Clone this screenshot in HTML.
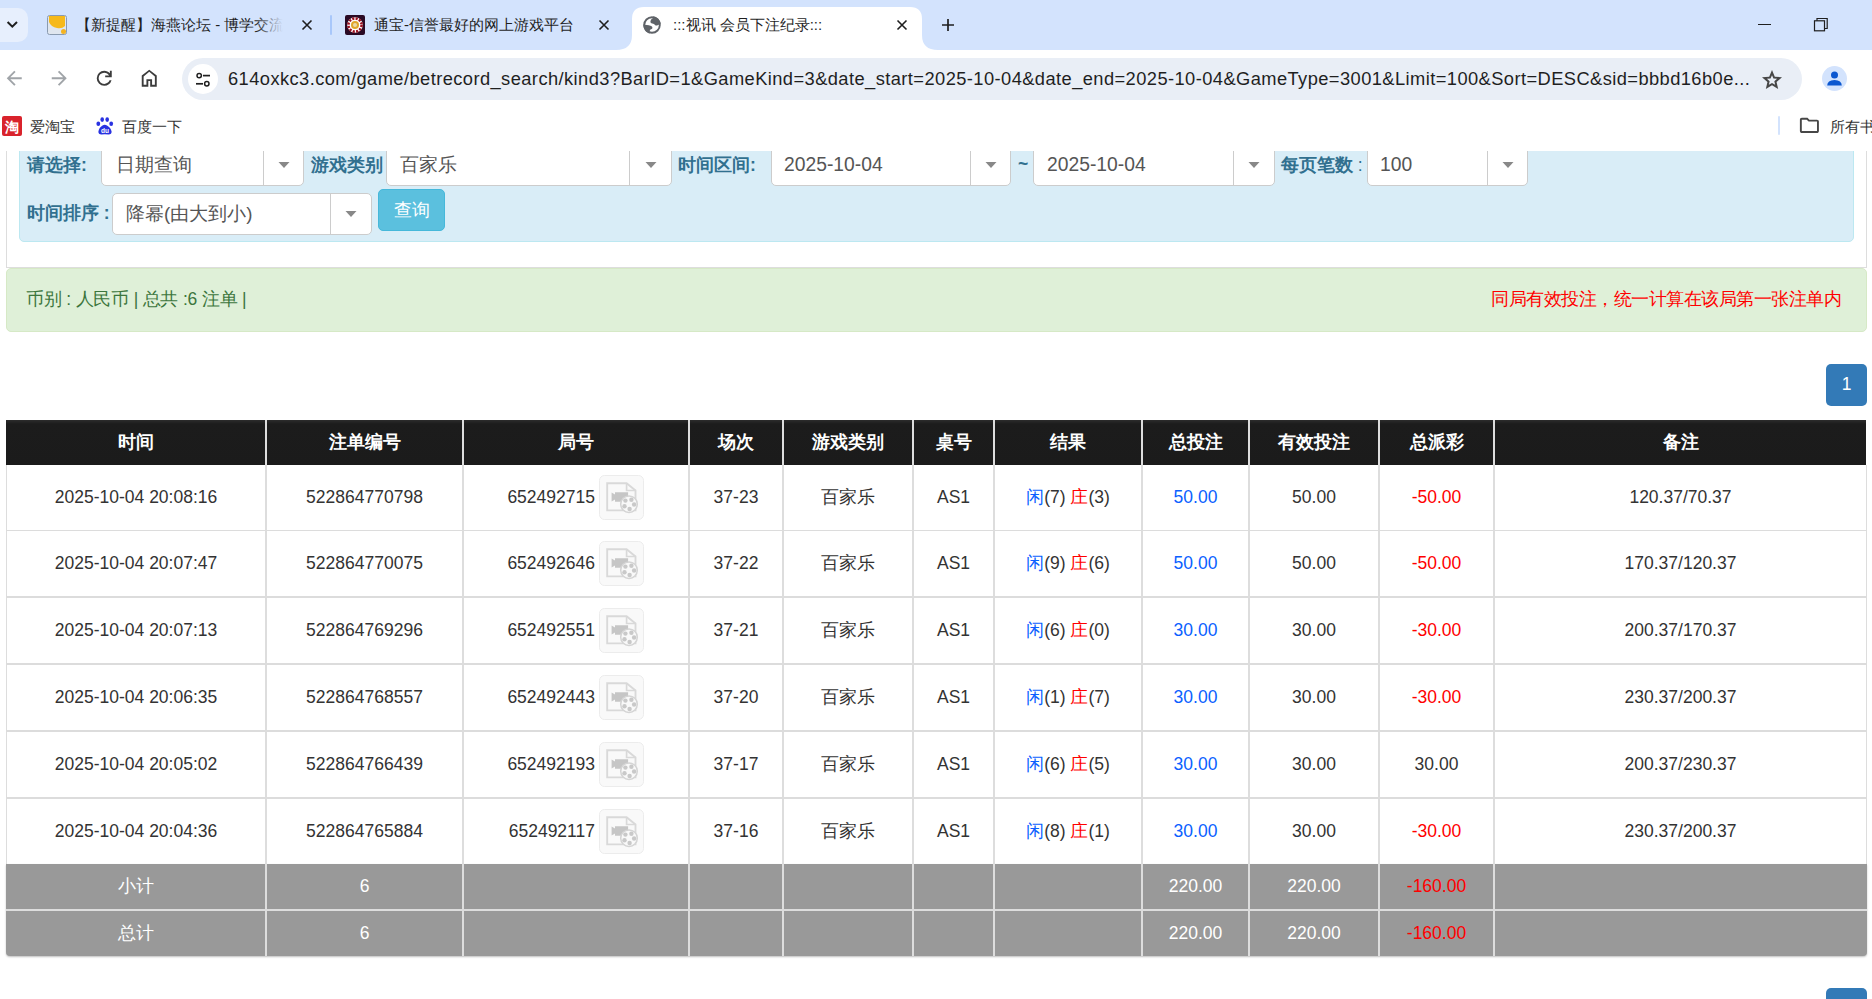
<!DOCTYPE html>
<html><head><meta charset="utf-8"><title>视讯 会员下注纪录</title>
<style>
html,body{margin:0;padding:0;width:1872px;height:999px;overflow:hidden;background:#fff;font-family:"Liberation Sans", sans-serif;}
svg{display:block}
</style></head><body>
<div style="position:absolute;left:0px;top:0px;width:1872px;height:50px;background:#d3e3fd"></div><div style="position:absolute;left:-14px;top:8px;width:42px;height:34px;background:#e7effd;border-radius:10px"></div><svg style="position:absolute;left:5px;top:18px" width="14" height="14" viewBox="0 0 14 14"><path d="M2.6 4 L7.3 8.7 L12 4" stroke="#1f1f1f" stroke-width="2" fill="none"/></svg><svg style="position:absolute;left:47px;top:15px" width="20" height="20" viewBox="0 0 20 20"><rect x="0.5" y="0.5" width="19" height="19" rx="2" fill="#dfe6ef" stroke="#8a9bb0" stroke-width="1"/><path d="M2 1 H18 V11 Q15 14 10 13 Q4 12 2 7 Z" fill="#f6b91a"/><circle cx="16.5" cy="16.5" r="2.5" fill="#f4b320"/></svg><div style="position:absolute;left:76px;top:14px;white-space:nowrap;font-size:15px;line-height:22px;color:#1f1f1f;width:210px;overflow:hidden">【新提醒】海燕论坛 - 博学交流</div><div style="position:absolute;left:255px;top:12px;width:40px;height:26px;background:linear-gradient(90deg, rgba(211,227,253,0), #d3e3fd 70%)"></div><svg style="position:absolute;left:301px;top:19px" width="12" height="12" viewBox="0 0 12 12"><path d="M1.5 1.5 L10.5 10.5 M10.5 1.5 L1.5 10.5" stroke="#1f1f1f" stroke-width="1.6"/></svg><div style="position:absolute;left:330px;top:15px;width:2px;height:20px;background:#a8c7fa;border-radius:1px"></div><svg style="position:absolute;left:345px;top:15px" width="20" height="20" viewBox="0 0 20 20"><rect x="0" y="0" width="20" height="20" rx="2" fill="#2a0a24"/><circle cx="10" cy="10" r="7.8" fill="#fff"/><circle cx="10" cy="10" r="6.6" fill="none" stroke="#9b1020" stroke-width="2.6" stroke-dasharray="2.2 1.3"/><circle cx="10" cy="10" r="4" fill="#e0a52a"/><circle cx="10" cy="10" r="2" fill="#e9d9a8"/></svg><div style="position:absolute;left:374px;top:14px;white-space:nowrap;font-size:15px;line-height:22px;color:#1f1f1f">通宝-信誉最好的网上游戏平台</div><svg style="position:absolute;left:598px;top:19px" width="12" height="12" viewBox="0 0 12 12"><path d="M1.5 1.5 L10.5 10.5 M10.5 1.5 L1.5 10.5" stroke="#1f1f1f" stroke-width="1.6"/></svg><svg style="position:absolute;left:616px;top:7px" width="322" height="43" viewBox="0 0 322 43"><path d="M0 43 Q16 43 16 28 L16 12 Q16 0 28 0 L294 0 Q306 0 306 12 L306 28 Q306 43 322 43 Z" fill="#fff"/></svg><svg style="position:absolute;left:640px;top:13px" width="24" height="24" viewBox="0 0 24 24"><circle cx="12" cy="12" r="7.8" fill="none" stroke="#5f6368" stroke-width="1.9"/><path d="M13.2 3.3 L13 5 Q10.6 6.5 10.4 8.2 Q10.2 10.4 12.3 10.6 Q14.3 10.8 15 12 Q16.2 13 18 12 L20.7 11 A8.7 8.7 0 0 0 13.2 3.3 Z" fill="#5f6368"/><path d="M3.3 11.6 L5 11.8 Q9.5 12.2 11.2 13 Q12.8 14 12.4 15.3 Q12 16.3 10.4 16.6 Q9.5 17.3 9.6 20.5 A8.7 8.7 0 0 1 3.3 11.6 Z" fill="#5f6368"/></svg><div style="position:absolute;left:673px;top:14px;white-space:nowrap;font-size:15px;line-height:22px;color:#1f1f1f">:::视讯 会员下注纪录:::</div><svg style="position:absolute;left:896px;top:19px" width="12" height="12" viewBox="0 0 12 12"><path d="M1.5 1.5 L10.5 10.5 M10.5 1.5 L1.5 10.5" stroke="#1f1f1f" stroke-width="1.6"/></svg><svg style="position:absolute;left:941px;top:18px" width="14" height="14" viewBox="0 0 14 14"><path d="M7 1 V13 M1 7 H13" stroke="#1f1f1f" stroke-width="1.7"/></svg><div style="position:absolute;left:1758px;top:24px;width:13px;height:1px;background:#1f1f1f"></div><svg style="position:absolute;left:1813px;top:17px" width="16" height="16" viewBox="0 0 16 16"><rect x="1.5" y="3.8" width="10" height="10" fill="none" stroke="#1f1f1f" stroke-width="1.2"/><path d="M4 3.8 V1.5 H14.2 V11.5 H11.5" fill="none" stroke="#1f1f1f" stroke-width="1.2"/></svg><div style="position:absolute;left:0px;top:50px;width:1872px;height:101px;background:#fff"></div><svg style="position:absolute;left:3.25px;top:67.25px" width="22.5" height="22.5" viewBox="0 -960 960 960"><path d="m313-440 224 224-57 56-320-320 320-320 57 56-224 224h487v80H313Z" fill="#a0a4a8"/></svg><svg style="position:absolute;left:48.25px;top:67.25px" width="22.5" height="22.5" viewBox="0 -960 960 960"><path d="M647-440H160v-80h487L423-744l57-56 320 320-320 320-57-56 224-224Z" fill="#a0a4a8"/></svg><svg style="position:absolute;left:93.25px;top:67.25px" width="22.5" height="22.5" viewBox="0 -960 960 960"><path d="M480-160q-134 0-227-93t-93-227q0-134 93-227t227-93q69 0 132 28.5T720-690v-110h80v280H520v-80h168q-32-56-87.5-88T480-720q-100 0-170 70t-70 170q0 100 70 170t170 70q77 0 139-44t87-116h84q-28 106-114 173t-196 67Z" fill="#3c3c3c"/></svg><svg style="position:absolute;left:138.25px;top:67.2px" width="22.5" height="22.5" viewBox="0 -960 960 960"><path d="M240-200h120v-240h240v240h120v-360L480-760 240-560v360Zm-80 80v-480l320-240 320 240v480H520v-240h-80v240H160Zm320-350Z" fill="#3c3c3c"/></svg><div style="position:absolute;left:182px;top:58px;width:1620px;height:42px;background:#e9eef6;border-radius:21px"></div><div style="position:absolute;left:188px;top:64px;width:30px;height:30px;background:#fff;border-radius:15px"></div><svg style="position:absolute;left:195px;top:72px" width="16" height="16" viewBox="0 0 16 16"><circle cx="4.2" cy="3.6" r="2.2" stroke="#1f1f1f" stroke-width="1.5" fill="none"/><path d="M8 3.6 H15" stroke="#1f1f1f" stroke-width="1.7"/><circle cx="11.8" cy="11.8" r="2.2" stroke="#1f1f1f" stroke-width="1.5" fill="none"/><path d="M1 11.8 H8" stroke="#1f1f1f" stroke-width="1.7"/></svg><div style="position:absolute;left:228px;top:66px;white-space:nowrap;font-size:18.3px;line-height:26px;color:#1f1f1f;letter-spacing:0.427px">614oxkc3.com/game/betrecord_search/kind3?BarID=1&amp;GameKind=3&amp;date_start=2025-10-04&amp;date_end=2025-10-04&amp;GameType=3001&amp;Limit=100&amp;Sort=DESC&amp;sid=bbbd16b0e...</div><svg style="position:absolute;left:1760px;top:68px" width="24" height="24" viewBox="0 -960 960 960"><path d="m354-287 126-76 126 77-33-144 111-96-146-13-58-136-58 135-146 13 111 97-33 143ZM233-120l65-281L80-590l288-25 112-265 112 265 288 25-218 189 65 281-247-149-247 149Z" fill="#474747"/></svg><div style="position:absolute;left:1822px;top:66px;width:25px;height:25px;background:#d3e3fd;border-radius:13px"></div><svg style="position:absolute;left:1826px;top:70px" width="17" height="17" viewBox="0 0 17 17"><circle cx="8.5" cy="5" r="3.5" fill="#0b57d0"/><path d="M1.2 15.5 Q1.3 10.2 8.5 10 Q15.7 10.2 15.8 15.5 Z" fill="#0b57d0"/></svg><svg style="position:absolute;left:2px;top:116px" width="20" height="20" viewBox="0 0 20 20"><rect width="20" height="20" rx="2" fill="#d9232c"/><text x="10" y="15.5" font-size="14" font-weight="bold" fill="#fff" text-anchor="middle" font-family="sans-serif">淘</text></svg><div style="position:absolute;left:30px;top:116px;white-space:nowrap;font-size:15px;line-height:22px;color:#333">爱淘宝</div><svg style="position:absolute;left:96px;top:116px" width="18" height="20" viewBox="0 0 18 20"><ellipse cx="2.3" cy="7.8" rx="1.9" ry="2.3" fill="#2932e1"/><ellipse cx="6.2" cy="3.6" rx="1.8" ry="2.4" fill="#2932e1"/><ellipse cx="11.2" cy="3.6" rx="1.8" ry="2.4" fill="#2932e1"/><ellipse cx="15.2" cy="7.8" rx="1.9" ry="2.3" fill="#2932e1"/><path d="M2.4 15.5 Q3 11.5 6.5 9.5 Q8.7 8 11 9.5 Q14.8 11.5 15.6 15.5 Q15.8 18.4 12.5 18.6 Q8.7 18 5.5 18.6 Q2.2 18.4 2.4 15.5 Z" fill="#2932e1"/><text x="8.9" y="16.8" font-size="6.5" fill="#fff" text-anchor="middle" font-family="Liberation Sans" font-weight="bold">du</text></svg><div style="position:absolute;left:122px;top:116px;white-space:nowrap;font-size:15px;line-height:22px;color:#333">百度一下</div><div style="position:absolute;left:1778px;top:116px;width:2px;height:19px;background:#d3e3fd;border-radius:1px"></div><svg style="position:absolute;left:1798.1px;top:114.2px" width="22.8" height="22.8" viewBox="0 -960 960 960"><path d="M160-160q-33 0-56.5-23.5T80-240v-480q0-33 23.5-56.5T160-800h240l80 80h320q33 0 56.5 23.5T880-640v400q0 33-23.5 56.5T800-160H160Zm0-80h640v-400H447l-80-80H160v480Zm0 0v-480 480Z" fill="#474747"/></svg><div style="position:absolute;left:1830px;top:116px;white-space:nowrap;font-size:15px;line-height:22px;color:#333">所有书签</div><div style="position:absolute;left:0;top:151px;width:1872px;height:848px;overflow:hidden;background:#fff"><div style="position:absolute;left:6px;top:-51px;width:1861px;height:168px;border:1px solid #ddd;border-top:none;box-sizing:border-box;border-bottom:1px solid #ddd"></div><div style="position:absolute;left:19px;top:-51px;width:1835px;height:142px;background:#d9edf7;border:1px solid #bce8f1;border-radius:5px;box-sizing:border-box"></div><div style="position:absolute;left:27.0px;top:-1.0px;width:400px;height:30px;display:flex;align-items:center;justify-content:center;white-space:nowrap;font-size:17.5px;font-weight:bold;color:#31708f;line-height:24px;justify-content:flex-start"><span>请选择:</span></div><div style="position:absolute;left:101px;top:-51px;width:203px;height:86px;background:#fff;border:1px solid #ccc;border-radius:5px;box-sizing:border-box"></div><div style="position:absolute;left:263px;top:-50px;width:1px;height:84px;background:#ccc"></div><svg style="position:absolute;left:277.5px;top:11px" width="12" height="6" viewBox="0 0 12 6"><path d="M0.5 0 H11.5 L6 6 Z" fill="#888"/></svg><div style="position:absolute;left:116.0px;top:-1.0px;width:400px;height:30px;display:flex;align-items:center;justify-content:center;white-space:nowrap;font-size:18.75px;color:#555;line-height:26px;justify-content:flex-start"><span>日期查询</span></div><div style="position:absolute;left:311.0px;top:-1.0px;width:400px;height:30px;display:flex;align-items:center;justify-content:center;white-space:nowrap;font-size:17.5px;font-weight:bold;color:#31708f;line-height:24px;justify-content:flex-start"><span>游戏类别</span></div><div style="position:absolute;left:386px;top:-51px;width:286px;height:86px;background:#fff;border:1px solid #ccc;border-radius:5px;box-sizing:border-box"></div><div style="position:absolute;left:629px;top:-50px;width:1px;height:84px;background:#ccc"></div><svg style="position:absolute;left:644.5px;top:11px" width="12" height="6" viewBox="0 0 12 6"><path d="M0.5 0 H11.5 L6 6 Z" fill="#888"/></svg><div style="position:absolute;left:400.0px;top:-1.0px;width:400px;height:30px;display:flex;align-items:center;justify-content:center;white-space:nowrap;font-size:18.75px;color:#555;line-height:26px;justify-content:flex-start"><span>百家乐</span></div><div style="position:absolute;left:678.0px;top:-1.0px;width:400px;height:30px;display:flex;align-items:center;justify-content:center;white-space:nowrap;font-size:17.5px;font-weight:bold;color:#31708f;line-height:24px;justify-content:flex-start"><span>时间区间:</span></div><div style="position:absolute;left:771px;top:-51px;width:240px;height:86px;background:#fff;border:1px solid #ccc;border-radius:5px;box-sizing:border-box"></div><div style="position:absolute;left:970px;top:-50px;width:1px;height:84px;background:#ccc"></div><svg style="position:absolute;left:984.5px;top:11px" width="12" height="6" viewBox="0 0 12 6"><path d="M0.5 0 H11.5 L6 6 Z" fill="#888"/></svg><div style="position:absolute;left:784.0px;top:-1.0px;width:400px;height:30px;display:flex;align-items:center;justify-content:center;white-space:nowrap;font-size:18.75px;color:#555;line-height:26px;justify-content:flex-start"><span><span style="font-size:19.3px">2025-10-04</span></span></div><div style="position:absolute;left:1013.0px;top:-2.0px;width:20px;height:30px;display:flex;align-items:center;justify-content:center;white-space:nowrap;font-size:17.5px;font-weight:bold;color:#31708f;line-height:24px"><span>~</span></div><div style="position:absolute;left:1033px;top:-51px;width:242px;height:86px;background:#fff;border:1px solid #ccc;border-radius:5px;box-sizing:border-box"></div><div style="position:absolute;left:1233px;top:-50px;width:1px;height:84px;background:#ccc"></div><svg style="position:absolute;left:1248.0px;top:11px" width="12" height="6" viewBox="0 0 12 6"><path d="M0.5 0 H11.5 L6 6 Z" fill="#888"/></svg><div style="position:absolute;left:1047.0px;top:-1.0px;width:400px;height:30px;display:flex;align-items:center;justify-content:center;white-space:nowrap;font-size:18.75px;color:#555;line-height:26px;justify-content:flex-start"><span><span style="font-size:19.3px">2025-10-04</span></span></div><div style="position:absolute;left:1281.0px;top:-1.0px;width:400px;height:30px;display:flex;align-items:center;justify-content:center;white-space:nowrap;font-size:17.5px;font-weight:bold;color:#31708f;line-height:24px;justify-content:flex-start"><span>每页笔数<span style="font-weight:normal"> :</span></span></div><div style="position:absolute;left:1367px;top:-51px;width:161px;height:86px;background:#fff;border:1px solid #ccc;border-radius:5px;box-sizing:border-box"></div><div style="position:absolute;left:1487px;top:-50px;width:1px;height:84px;background:#ccc"></div><svg style="position:absolute;left:1501.5px;top:11px" width="12" height="6" viewBox="0 0 12 6"><path d="M0.5 0 H11.5 L6 6 Z" fill="#888"/></svg><div style="position:absolute;left:1380.0px;top:-1.0px;width:400px;height:30px;display:flex;align-items:center;justify-content:center;white-space:nowrap;font-size:18.75px;color:#555;line-height:26px;justify-content:flex-start"><span><span style="font-size:19.3px">100</span></span></div><div style="position:absolute;left:27.0px;top:47.0px;width:400px;height:30px;display:flex;align-items:center;justify-content:center;white-space:nowrap;font-size:17.5px;font-weight:bold;color:#31708f;line-height:24px;justify-content:flex-start"><span>时间排序 :</span></div><div style="position:absolute;left:112px;top:42px;width:260px;height:42px;background:#fff;border:1px solid #ccc;border-radius:5px;box-sizing:border-box"></div><div style="position:absolute;left:330px;top:43px;width:1px;height:40px;background:#ccc"></div><svg style="position:absolute;left:345.0px;top:60.0px" width="12" height="6" viewBox="0 0 12 6"><path d="M0.5 0 H11.5 L6 6 Z" fill="#888"/></svg><div style="position:absolute;left:126.0px;top:48.0px;width:400px;height:30px;display:flex;align-items:center;justify-content:center;white-space:nowrap;font-size:18.75px;color:#555;line-height:26px;justify-content:flex-start"><span>降幂(由大到小)</span></div><div style="position:absolute;left:378px;top:38px;width:67px;height:42px;background:#5bc0de;border:1px solid #46b8da;border-radius:5px;box-sizing:border-box"></div><div style="position:absolute;left:381.5px;top:43.5px;width:60px;height:30px;display:flex;align-items:center;justify-content:center;white-space:nowrap;font-size:17.5px;color:#fff"><span>查询</span></div><div style="position:absolute;left:6px;top:117px;width:1861px;height:64px;background:#dff0d8;border:1px solid #d6e9c6;border-radius:5px;box-sizing:border-box"></div><div style="position:absolute;left:26.0px;top:133.0px;width:600px;height:30px;display:flex;align-items:center;justify-content:center;white-space:nowrap;font-size:17.5px;letter-spacing:-0.2px;color:#3c763d;justify-content:flex-start"><span>币别 : 人民币 | 总共 :6 注单 |</span></div><div style="position:absolute;left:1241.0px;top:133.0px;width:600px;height:30px;display:flex;align-items:center;justify-content:center;white-space:nowrap;font-size:17.5px;letter-spacing:-0.5px;color:#ff0000;justify-content:flex-end"><span>同局有效投注，统一计算在该局第一张注单内</span></div><div style="position:absolute;left:1826px;top:213px;width:41px;height:42px;background:#337ab7;border-radius:5px"></div><div style="position:absolute;left:1826.5px;top:218.0px;width:40px;height:30px;display:flex;align-items:center;justify-content:center;white-space:nowrap;font-size:17.5px;color:#fff"><span>1</span></div><div style="position:absolute;left:6px;top:269px;width:1860px;height:45px;background:linear-gradient(#2c2c2c, #1c1c1c 4px, #1b1b1b)"></div><div style="position:absolute;left:6px;top:314px;width:1861px;height:399px;background:#fff;border-left:1px solid #ddd;border-right:1px solid #ddd;box-sizing:border-box"></div><div style="position:absolute;left:6px;top:713px;width:1861px;height:92px;background:#999;border-radius:0 0 4px 4px;box-shadow:0 1px 2px rgba(0,0,0,0.25)"></div><div style="position:absolute;left:265px;top:269px;width:2px;height:45px;background:#ddd"></div><div style="position:absolute;left:265px;top:314px;width:2px;height:491px;background:#ddd"></div><div style="position:absolute;left:462px;top:269px;width:2px;height:45px;background:#ddd"></div><div style="position:absolute;left:462px;top:314px;width:2px;height:491px;background:#ddd"></div><div style="position:absolute;left:688px;top:269px;width:2px;height:45px;background:#ddd"></div><div style="position:absolute;left:688px;top:314px;width:2px;height:491px;background:#ddd"></div><div style="position:absolute;left:782px;top:269px;width:2px;height:45px;background:#ddd"></div><div style="position:absolute;left:782px;top:314px;width:2px;height:491px;background:#ddd"></div><div style="position:absolute;left:912px;top:269px;width:2px;height:45px;background:#ddd"></div><div style="position:absolute;left:912px;top:314px;width:2px;height:491px;background:#ddd"></div><div style="position:absolute;left:993px;top:269px;width:2px;height:45px;background:#ddd"></div><div style="position:absolute;left:993px;top:314px;width:2px;height:491px;background:#ddd"></div><div style="position:absolute;left:1141px;top:269px;width:2px;height:45px;background:#ddd"></div><div style="position:absolute;left:1141px;top:314px;width:2px;height:491px;background:#ddd"></div><div style="position:absolute;left:1248px;top:269px;width:2px;height:45px;background:#ddd"></div><div style="position:absolute;left:1248px;top:314px;width:2px;height:491px;background:#ddd"></div><div style="position:absolute;left:1378px;top:269px;width:2px;height:45px;background:#ddd"></div><div style="position:absolute;left:1378px;top:314px;width:2px;height:491px;background:#ddd"></div><div style="position:absolute;left:1493px;top:269px;width:2px;height:45px;background:#ddd"></div><div style="position:absolute;left:1493px;top:314px;width:2px;height:491px;background:#ddd"></div><div style="position:absolute;left:6px;top:379px;width:1861px;height:1px;background:#dcdcdc"></div><div style="position:absolute;left:6px;top:445px;width:1861px;height:2px;background:#dcdcdc"></div><div style="position:absolute;left:6px;top:512px;width:1861px;height:2px;background:#dcdcdc"></div><div style="position:absolute;left:6px;top:579px;width:1861px;height:2px;background:#dcdcdc"></div><div style="position:absolute;left:6px;top:646px;width:1861px;height:2px;background:#dcdcdc"></div><div style="position:absolute;left:6px;top:758px;width:1861px;height:2px;background:#ddd"></div><div style="position:absolute;left:-14.0px;top:276.0px;width:300px;height:30px;display:flex;align-items:center;justify-content:center;white-space:nowrap;font-size:17.5px;font-weight:bold;color:#fff"><span>时间</span></div><div style="position:absolute;left:214.5px;top:276.0px;width:300px;height:30px;display:flex;align-items:center;justify-content:center;white-space:nowrap;font-size:17.5px;font-weight:bold;color:#fff"><span>注单编号</span></div><div style="position:absolute;left:426.0px;top:276.0px;width:300px;height:30px;display:flex;align-items:center;justify-content:center;white-space:nowrap;font-size:17.5px;font-weight:bold;color:#fff"><span>局号</span></div><div style="position:absolute;left:586.0px;top:276.0px;width:300px;height:30px;display:flex;align-items:center;justify-content:center;white-space:nowrap;font-size:17.5px;font-weight:bold;color:#fff"><span>场次</span></div><div style="position:absolute;left:698.0px;top:276.0px;width:300px;height:30px;display:flex;align-items:center;justify-content:center;white-space:nowrap;font-size:17.5px;font-weight:bold;color:#fff"><span>游戏类别</span></div><div style="position:absolute;left:803.5px;top:276.0px;width:300px;height:30px;display:flex;align-items:center;justify-content:center;white-space:nowrap;font-size:17.5px;font-weight:bold;color:#fff"><span>桌号</span></div><div style="position:absolute;left:918.0px;top:276.0px;width:300px;height:30px;display:flex;align-items:center;justify-content:center;white-space:nowrap;font-size:17.5px;font-weight:bold;color:#fff"><span>结果</span></div><div style="position:absolute;left:1045.5px;top:276.0px;width:300px;height:30px;display:flex;align-items:center;justify-content:center;white-space:nowrap;font-size:17.5px;font-weight:bold;color:#fff"><span>总投注</span></div><div style="position:absolute;left:1164.0px;top:276.0px;width:300px;height:30px;display:flex;align-items:center;justify-content:center;white-space:nowrap;font-size:17.5px;font-weight:bold;color:#fff"><span>有效投注</span></div><div style="position:absolute;left:1286.5px;top:276.0px;width:300px;height:30px;display:flex;align-items:center;justify-content:center;white-space:nowrap;font-size:17.5px;font-weight:bold;color:#fff"><span>总派彩</span></div><div style="position:absolute;left:1530.5px;top:276.0px;width:300px;height:30px;display:flex;align-items:center;justify-content:center;white-space:nowrap;font-size:17.5px;font-weight:bold;color:#fff"><span>备注</span></div><div style="position:absolute;left:11.0px;top:331.0px;width:250px;height:30px;display:flex;align-items:center;justify-content:center;white-space:nowrap;font-size:17.5px;color:#333"><span>2025-10-04 20:08:16</span></div><div style="position:absolute;left:269.5px;top:331.0px;width:190px;height:30px;display:flex;align-items:center;justify-content:center;white-space:nowrap;font-size:17.5px;color:#333"><span>522864770798</span></div><div style="position:absolute;left:295.0px;top:331.0px;width:300px;height:30px;display:flex;align-items:center;justify-content:center;white-space:nowrap;font-size:17.5px;color:#333;justify-content:flex-end"><span>652492715</span></div><svg style="position:absolute;left:599px;top:324px" width="45" height="45" viewBox="0 0 45 45"><rect x="0.5" y="0.5" width="44" height="44" rx="5" fill="#f9f9f9" stroke="#ececec" stroke-width="1"/><path d="M8.2 8.3 H27.6 L36.5 15.5 V35.4 H8.2 Z" fill="#f9f9f9" stroke="#d9d9d9" stroke-width="1.9"/><path d="M27.6 8.3 V15.5 H36.5" fill="none" stroke="#d9d9d9" stroke-width="1.7"/><path d="M12.6 17.5 L16 19.5 V17.2 H29.1 V26.8 H16 V24.5 L12.6 26.5 Z" fill="#c6c6c6"/><circle cx="30" cy="29.2" r="8.3" fill="#f9f9f9" stroke="#d4d4d4" stroke-width="1.5"/><circle cx="26.4" cy="25.6" r="2.2" fill="#c9c9c9"/><circle cx="32.4" cy="24.7" r="2.2" fill="#c9c9c9"/><circle cx="35.1" cy="29.5" r="2.2" fill="#c9c9c9"/><circle cx="30.6" cy="34" r="2.2" fill="#c9c9c9"/><circle cx="25.5" cy="31.3" r="2.2" fill="#c9c9c9"/></svg><div style="position:absolute;left:691.0px;top:331.0px;width:90px;height:30px;display:flex;align-items:center;justify-content:center;white-space:nowrap;font-size:17.5px;color:#333"><span>37-23</span></div><div style="position:absolute;left:788.0px;top:331.0px;width:120px;height:30px;display:flex;align-items:center;justify-content:center;white-space:nowrap;font-size:17.5px;color:#333"><span>百家乐</span></div><div style="position:absolute;left:913.5px;top:331.0px;width:80px;height:30px;display:flex;align-items:center;justify-content:center;white-space:nowrap;font-size:17.5px;color:#333"><span>AS1</span></div><div style="position:absolute;left:998.0px;top:331.0px;width:140px;height:30px;display:flex;align-items:center;justify-content:center;white-space:nowrap;font-size:17.5px;color:#333"><span><span style="color:#0b5fff">闲</span>(7) <span style="color:#ff0000">庄</span>(3)</span></div><div style="position:absolute;left:1145.5px;top:331.0px;width:100px;height:30px;display:flex;align-items:center;justify-content:center;white-space:nowrap;font-size:17.5px;color:#333;color:#0b5fff"><span>50.00</span></div><div style="position:absolute;left:1254.0px;top:331.0px;width:120px;height:30px;display:flex;align-items:center;justify-content:center;white-space:nowrap;font-size:17.5px;color:#333"><span>50.00</span></div><div style="position:absolute;left:1381.5px;top:331.0px;width:110px;height:30px;display:flex;align-items:center;justify-content:center;white-space:nowrap;font-size:17.5px;color:#333;color:#ff0000"><span>-50.00</span></div><div style="position:absolute;left:1530.5px;top:331.0px;width:300px;height:30px;display:flex;align-items:center;justify-content:center;white-space:nowrap;font-size:17.5px;color:#333"><span>120.37/70.37</span></div><div style="position:absolute;left:11.0px;top:397.0px;width:250px;height:30px;display:flex;align-items:center;justify-content:center;white-space:nowrap;font-size:17.5px;color:#333"><span>2025-10-04 20:07:47</span></div><div style="position:absolute;left:269.5px;top:397.0px;width:190px;height:30px;display:flex;align-items:center;justify-content:center;white-space:nowrap;font-size:17.5px;color:#333"><span>522864770075</span></div><div style="position:absolute;left:295.0px;top:397.0px;width:300px;height:30px;display:flex;align-items:center;justify-content:center;white-space:nowrap;font-size:17.5px;color:#333;justify-content:flex-end"><span>652492646</span></div><svg style="position:absolute;left:599px;top:390px" width="45" height="45" viewBox="0 0 45 45"><rect x="0.5" y="0.5" width="44" height="44" rx="5" fill="#f9f9f9" stroke="#ececec" stroke-width="1"/><path d="M8.2 8.3 H27.6 L36.5 15.5 V35.4 H8.2 Z" fill="#f9f9f9" stroke="#d9d9d9" stroke-width="1.9"/><path d="M27.6 8.3 V15.5 H36.5" fill="none" stroke="#d9d9d9" stroke-width="1.7"/><path d="M12.6 17.5 L16 19.5 V17.2 H29.1 V26.8 H16 V24.5 L12.6 26.5 Z" fill="#c6c6c6"/><circle cx="30" cy="29.2" r="8.3" fill="#f9f9f9" stroke="#d4d4d4" stroke-width="1.5"/><circle cx="26.4" cy="25.6" r="2.2" fill="#c9c9c9"/><circle cx="32.4" cy="24.7" r="2.2" fill="#c9c9c9"/><circle cx="35.1" cy="29.5" r="2.2" fill="#c9c9c9"/><circle cx="30.6" cy="34" r="2.2" fill="#c9c9c9"/><circle cx="25.5" cy="31.3" r="2.2" fill="#c9c9c9"/></svg><div style="position:absolute;left:691.0px;top:397.0px;width:90px;height:30px;display:flex;align-items:center;justify-content:center;white-space:nowrap;font-size:17.5px;color:#333"><span>37-22</span></div><div style="position:absolute;left:788.0px;top:397.0px;width:120px;height:30px;display:flex;align-items:center;justify-content:center;white-space:nowrap;font-size:17.5px;color:#333"><span>百家乐</span></div><div style="position:absolute;left:913.5px;top:397.0px;width:80px;height:30px;display:flex;align-items:center;justify-content:center;white-space:nowrap;font-size:17.5px;color:#333"><span>AS1</span></div><div style="position:absolute;left:998.0px;top:397.0px;width:140px;height:30px;display:flex;align-items:center;justify-content:center;white-space:nowrap;font-size:17.5px;color:#333"><span><span style="color:#0b5fff">闲</span>(9) <span style="color:#ff0000">庄</span>(6)</span></div><div style="position:absolute;left:1145.5px;top:397.0px;width:100px;height:30px;display:flex;align-items:center;justify-content:center;white-space:nowrap;font-size:17.5px;color:#333;color:#0b5fff"><span>50.00</span></div><div style="position:absolute;left:1254.0px;top:397.0px;width:120px;height:30px;display:flex;align-items:center;justify-content:center;white-space:nowrap;font-size:17.5px;color:#333"><span>50.00</span></div><div style="position:absolute;left:1381.5px;top:397.0px;width:110px;height:30px;display:flex;align-items:center;justify-content:center;white-space:nowrap;font-size:17.5px;color:#333;color:#ff0000"><span>-50.00</span></div><div style="position:absolute;left:1530.5px;top:397.0px;width:300px;height:30px;display:flex;align-items:center;justify-content:center;white-space:nowrap;font-size:17.5px;color:#333"><span>170.37/120.37</span></div><div style="position:absolute;left:11.0px;top:464.0px;width:250px;height:30px;display:flex;align-items:center;justify-content:center;white-space:nowrap;font-size:17.5px;color:#333"><span>2025-10-04 20:07:13</span></div><div style="position:absolute;left:269.5px;top:464.0px;width:190px;height:30px;display:flex;align-items:center;justify-content:center;white-space:nowrap;font-size:17.5px;color:#333"><span>522864769296</span></div><div style="position:absolute;left:295.0px;top:464.0px;width:300px;height:30px;display:flex;align-items:center;justify-content:center;white-space:nowrap;font-size:17.5px;color:#333;justify-content:flex-end"><span>652492551</span></div><svg style="position:absolute;left:599px;top:457px" width="45" height="45" viewBox="0 0 45 45"><rect x="0.5" y="0.5" width="44" height="44" rx="5" fill="#f9f9f9" stroke="#ececec" stroke-width="1"/><path d="M8.2 8.3 H27.6 L36.5 15.5 V35.4 H8.2 Z" fill="#f9f9f9" stroke="#d9d9d9" stroke-width="1.9"/><path d="M27.6 8.3 V15.5 H36.5" fill="none" stroke="#d9d9d9" stroke-width="1.7"/><path d="M12.6 17.5 L16 19.5 V17.2 H29.1 V26.8 H16 V24.5 L12.6 26.5 Z" fill="#c6c6c6"/><circle cx="30" cy="29.2" r="8.3" fill="#f9f9f9" stroke="#d4d4d4" stroke-width="1.5"/><circle cx="26.4" cy="25.6" r="2.2" fill="#c9c9c9"/><circle cx="32.4" cy="24.7" r="2.2" fill="#c9c9c9"/><circle cx="35.1" cy="29.5" r="2.2" fill="#c9c9c9"/><circle cx="30.6" cy="34" r="2.2" fill="#c9c9c9"/><circle cx="25.5" cy="31.3" r="2.2" fill="#c9c9c9"/></svg><div style="position:absolute;left:691.0px;top:464.0px;width:90px;height:30px;display:flex;align-items:center;justify-content:center;white-space:nowrap;font-size:17.5px;color:#333"><span>37-21</span></div><div style="position:absolute;left:788.0px;top:464.0px;width:120px;height:30px;display:flex;align-items:center;justify-content:center;white-space:nowrap;font-size:17.5px;color:#333"><span>百家乐</span></div><div style="position:absolute;left:913.5px;top:464.0px;width:80px;height:30px;display:flex;align-items:center;justify-content:center;white-space:nowrap;font-size:17.5px;color:#333"><span>AS1</span></div><div style="position:absolute;left:998.0px;top:464.0px;width:140px;height:30px;display:flex;align-items:center;justify-content:center;white-space:nowrap;font-size:17.5px;color:#333"><span><span style="color:#0b5fff">闲</span>(6) <span style="color:#ff0000">庄</span>(0)</span></div><div style="position:absolute;left:1145.5px;top:464.0px;width:100px;height:30px;display:flex;align-items:center;justify-content:center;white-space:nowrap;font-size:17.5px;color:#333;color:#0b5fff"><span>30.00</span></div><div style="position:absolute;left:1254.0px;top:464.0px;width:120px;height:30px;display:flex;align-items:center;justify-content:center;white-space:nowrap;font-size:17.5px;color:#333"><span>30.00</span></div><div style="position:absolute;left:1381.5px;top:464.0px;width:110px;height:30px;display:flex;align-items:center;justify-content:center;white-space:nowrap;font-size:17.5px;color:#333;color:#ff0000"><span>-30.00</span></div><div style="position:absolute;left:1530.5px;top:464.0px;width:300px;height:30px;display:flex;align-items:center;justify-content:center;white-space:nowrap;font-size:17.5px;color:#333"><span>200.37/170.37</span></div><div style="position:absolute;left:11.0px;top:531.0px;width:250px;height:30px;display:flex;align-items:center;justify-content:center;white-space:nowrap;font-size:17.5px;color:#333"><span>2025-10-04 20:06:35</span></div><div style="position:absolute;left:269.5px;top:531.0px;width:190px;height:30px;display:flex;align-items:center;justify-content:center;white-space:nowrap;font-size:17.5px;color:#333"><span>522864768557</span></div><div style="position:absolute;left:295.0px;top:531.0px;width:300px;height:30px;display:flex;align-items:center;justify-content:center;white-space:nowrap;font-size:17.5px;color:#333;justify-content:flex-end"><span>652492443</span></div><svg style="position:absolute;left:599px;top:524px" width="45" height="45" viewBox="0 0 45 45"><rect x="0.5" y="0.5" width="44" height="44" rx="5" fill="#f9f9f9" stroke="#ececec" stroke-width="1"/><path d="M8.2 8.3 H27.6 L36.5 15.5 V35.4 H8.2 Z" fill="#f9f9f9" stroke="#d9d9d9" stroke-width="1.9"/><path d="M27.6 8.3 V15.5 H36.5" fill="none" stroke="#d9d9d9" stroke-width="1.7"/><path d="M12.6 17.5 L16 19.5 V17.2 H29.1 V26.8 H16 V24.5 L12.6 26.5 Z" fill="#c6c6c6"/><circle cx="30" cy="29.2" r="8.3" fill="#f9f9f9" stroke="#d4d4d4" stroke-width="1.5"/><circle cx="26.4" cy="25.6" r="2.2" fill="#c9c9c9"/><circle cx="32.4" cy="24.7" r="2.2" fill="#c9c9c9"/><circle cx="35.1" cy="29.5" r="2.2" fill="#c9c9c9"/><circle cx="30.6" cy="34" r="2.2" fill="#c9c9c9"/><circle cx="25.5" cy="31.3" r="2.2" fill="#c9c9c9"/></svg><div style="position:absolute;left:691.0px;top:531.0px;width:90px;height:30px;display:flex;align-items:center;justify-content:center;white-space:nowrap;font-size:17.5px;color:#333"><span>37-20</span></div><div style="position:absolute;left:788.0px;top:531.0px;width:120px;height:30px;display:flex;align-items:center;justify-content:center;white-space:nowrap;font-size:17.5px;color:#333"><span>百家乐</span></div><div style="position:absolute;left:913.5px;top:531.0px;width:80px;height:30px;display:flex;align-items:center;justify-content:center;white-space:nowrap;font-size:17.5px;color:#333"><span>AS1</span></div><div style="position:absolute;left:998.0px;top:531.0px;width:140px;height:30px;display:flex;align-items:center;justify-content:center;white-space:nowrap;font-size:17.5px;color:#333"><span><span style="color:#0b5fff">闲</span>(1) <span style="color:#ff0000">庄</span>(7)</span></div><div style="position:absolute;left:1145.5px;top:531.0px;width:100px;height:30px;display:flex;align-items:center;justify-content:center;white-space:nowrap;font-size:17.5px;color:#333;color:#0b5fff"><span>30.00</span></div><div style="position:absolute;left:1254.0px;top:531.0px;width:120px;height:30px;display:flex;align-items:center;justify-content:center;white-space:nowrap;font-size:17.5px;color:#333"><span>30.00</span></div><div style="position:absolute;left:1381.5px;top:531.0px;width:110px;height:30px;display:flex;align-items:center;justify-content:center;white-space:nowrap;font-size:17.5px;color:#333;color:#ff0000"><span>-30.00</span></div><div style="position:absolute;left:1530.5px;top:531.0px;width:300px;height:30px;display:flex;align-items:center;justify-content:center;white-space:nowrap;font-size:17.5px;color:#333"><span>230.37/200.37</span></div><div style="position:absolute;left:11.0px;top:598.0px;width:250px;height:30px;display:flex;align-items:center;justify-content:center;white-space:nowrap;font-size:17.5px;color:#333"><span>2025-10-04 20:05:02</span></div><div style="position:absolute;left:269.5px;top:598.0px;width:190px;height:30px;display:flex;align-items:center;justify-content:center;white-space:nowrap;font-size:17.5px;color:#333"><span>522864766439</span></div><div style="position:absolute;left:295.0px;top:598.0px;width:300px;height:30px;display:flex;align-items:center;justify-content:center;white-space:nowrap;font-size:17.5px;color:#333;justify-content:flex-end"><span>652492193</span></div><svg style="position:absolute;left:599px;top:591px" width="45" height="45" viewBox="0 0 45 45"><rect x="0.5" y="0.5" width="44" height="44" rx="5" fill="#f9f9f9" stroke="#ececec" stroke-width="1"/><path d="M8.2 8.3 H27.6 L36.5 15.5 V35.4 H8.2 Z" fill="#f9f9f9" stroke="#d9d9d9" stroke-width="1.9"/><path d="M27.6 8.3 V15.5 H36.5" fill="none" stroke="#d9d9d9" stroke-width="1.7"/><path d="M12.6 17.5 L16 19.5 V17.2 H29.1 V26.8 H16 V24.5 L12.6 26.5 Z" fill="#c6c6c6"/><circle cx="30" cy="29.2" r="8.3" fill="#f9f9f9" stroke="#d4d4d4" stroke-width="1.5"/><circle cx="26.4" cy="25.6" r="2.2" fill="#c9c9c9"/><circle cx="32.4" cy="24.7" r="2.2" fill="#c9c9c9"/><circle cx="35.1" cy="29.5" r="2.2" fill="#c9c9c9"/><circle cx="30.6" cy="34" r="2.2" fill="#c9c9c9"/><circle cx="25.5" cy="31.3" r="2.2" fill="#c9c9c9"/></svg><div style="position:absolute;left:691.0px;top:598.0px;width:90px;height:30px;display:flex;align-items:center;justify-content:center;white-space:nowrap;font-size:17.5px;color:#333"><span>37-17</span></div><div style="position:absolute;left:788.0px;top:598.0px;width:120px;height:30px;display:flex;align-items:center;justify-content:center;white-space:nowrap;font-size:17.5px;color:#333"><span>百家乐</span></div><div style="position:absolute;left:913.5px;top:598.0px;width:80px;height:30px;display:flex;align-items:center;justify-content:center;white-space:nowrap;font-size:17.5px;color:#333"><span>AS1</span></div><div style="position:absolute;left:998.0px;top:598.0px;width:140px;height:30px;display:flex;align-items:center;justify-content:center;white-space:nowrap;font-size:17.5px;color:#333"><span><span style="color:#0b5fff">闲</span>(6) <span style="color:#ff0000">庄</span>(5)</span></div><div style="position:absolute;left:1145.5px;top:598.0px;width:100px;height:30px;display:flex;align-items:center;justify-content:center;white-space:nowrap;font-size:17.5px;color:#333;color:#0b5fff"><span>30.00</span></div><div style="position:absolute;left:1254.0px;top:598.0px;width:120px;height:30px;display:flex;align-items:center;justify-content:center;white-space:nowrap;font-size:17.5px;color:#333"><span>30.00</span></div><div style="position:absolute;left:1381.5px;top:598.0px;width:110px;height:30px;display:flex;align-items:center;justify-content:center;white-space:nowrap;font-size:17.5px;color:#333;color:#333"><span>30.00</span></div><div style="position:absolute;left:1530.5px;top:598.0px;width:300px;height:30px;display:flex;align-items:center;justify-content:center;white-space:nowrap;font-size:17.5px;color:#333"><span>200.37/230.37</span></div><div style="position:absolute;left:11.0px;top:665.0px;width:250px;height:30px;display:flex;align-items:center;justify-content:center;white-space:nowrap;font-size:17.5px;color:#333"><span>2025-10-04 20:04:36</span></div><div style="position:absolute;left:269.5px;top:665.0px;width:190px;height:30px;display:flex;align-items:center;justify-content:center;white-space:nowrap;font-size:17.5px;color:#333"><span>522864765884</span></div><div style="position:absolute;left:295.0px;top:665.0px;width:300px;height:30px;display:flex;align-items:center;justify-content:center;white-space:nowrap;font-size:17.5px;color:#333;justify-content:flex-end"><span>652492117</span></div><svg style="position:absolute;left:599px;top:658px" width="45" height="45" viewBox="0 0 45 45"><rect x="0.5" y="0.5" width="44" height="44" rx="5" fill="#f9f9f9" stroke="#ececec" stroke-width="1"/><path d="M8.2 8.3 H27.6 L36.5 15.5 V35.4 H8.2 Z" fill="#f9f9f9" stroke="#d9d9d9" stroke-width="1.9"/><path d="M27.6 8.3 V15.5 H36.5" fill="none" stroke="#d9d9d9" stroke-width="1.7"/><path d="M12.6 17.5 L16 19.5 V17.2 H29.1 V26.8 H16 V24.5 L12.6 26.5 Z" fill="#c6c6c6"/><circle cx="30" cy="29.2" r="8.3" fill="#f9f9f9" stroke="#d4d4d4" stroke-width="1.5"/><circle cx="26.4" cy="25.6" r="2.2" fill="#c9c9c9"/><circle cx="32.4" cy="24.7" r="2.2" fill="#c9c9c9"/><circle cx="35.1" cy="29.5" r="2.2" fill="#c9c9c9"/><circle cx="30.6" cy="34" r="2.2" fill="#c9c9c9"/><circle cx="25.5" cy="31.3" r="2.2" fill="#c9c9c9"/></svg><div style="position:absolute;left:691.0px;top:665.0px;width:90px;height:30px;display:flex;align-items:center;justify-content:center;white-space:nowrap;font-size:17.5px;color:#333"><span>37-16</span></div><div style="position:absolute;left:788.0px;top:665.0px;width:120px;height:30px;display:flex;align-items:center;justify-content:center;white-space:nowrap;font-size:17.5px;color:#333"><span>百家乐</span></div><div style="position:absolute;left:913.5px;top:665.0px;width:80px;height:30px;display:flex;align-items:center;justify-content:center;white-space:nowrap;font-size:17.5px;color:#333"><span>AS1</span></div><div style="position:absolute;left:998.0px;top:665.0px;width:140px;height:30px;display:flex;align-items:center;justify-content:center;white-space:nowrap;font-size:17.5px;color:#333"><span><span style="color:#0b5fff">闲</span>(8) <span style="color:#ff0000">庄</span>(1)</span></div><div style="position:absolute;left:1145.5px;top:665.0px;width:100px;height:30px;display:flex;align-items:center;justify-content:center;white-space:nowrap;font-size:17.5px;color:#333;color:#0b5fff"><span>30.00</span></div><div style="position:absolute;left:1254.0px;top:665.0px;width:120px;height:30px;display:flex;align-items:center;justify-content:center;white-space:nowrap;font-size:17.5px;color:#333"><span>30.00</span></div><div style="position:absolute;left:1381.5px;top:665.0px;width:110px;height:30px;display:flex;align-items:center;justify-content:center;white-space:nowrap;font-size:17.5px;color:#333;color:#ff0000"><span>-30.00</span></div><div style="position:absolute;left:1530.5px;top:665.0px;width:300px;height:30px;display:flex;align-items:center;justify-content:center;white-space:nowrap;font-size:17.5px;color:#333"><span>230.37/200.37</span></div><div style="position:absolute;left:36.0px;top:720.0px;width:200px;height:30px;display:flex;align-items:center;justify-content:center;white-space:nowrap;font-size:17.5px;color:#fff"><span>小计</span></div><div style="position:absolute;left:314.5px;top:720.0px;width:100px;height:30px;display:flex;align-items:center;justify-content:center;white-space:nowrap;font-size:17.5px;color:#fff"><span>6</span></div><div style="position:absolute;left:1145.5px;top:720.0px;width:100px;height:30px;display:flex;align-items:center;justify-content:center;white-space:nowrap;font-size:17.5px;color:#fff"><span>220.00</span></div><div style="position:absolute;left:1264.0px;top:720.0px;width:100px;height:30px;display:flex;align-items:center;justify-content:center;white-space:nowrap;font-size:17.5px;color:#fff"><span>220.00</span></div><div style="position:absolute;left:1381.5px;top:720.0px;width:110px;height:30px;display:flex;align-items:center;justify-content:center;white-space:nowrap;font-size:17.5px;color:#ff0000"><span>-160.00</span></div><div style="position:absolute;left:36.0px;top:767.0px;width:200px;height:30px;display:flex;align-items:center;justify-content:center;white-space:nowrap;font-size:17.5px;color:#fff"><span>总计</span></div><div style="position:absolute;left:314.5px;top:767.0px;width:100px;height:30px;display:flex;align-items:center;justify-content:center;white-space:nowrap;font-size:17.5px;color:#fff"><span>6</span></div><div style="position:absolute;left:1145.5px;top:767.0px;width:100px;height:30px;display:flex;align-items:center;justify-content:center;white-space:nowrap;font-size:17.5px;color:#fff"><span>220.00</span></div><div style="position:absolute;left:1264.0px;top:767.0px;width:100px;height:30px;display:flex;align-items:center;justify-content:center;white-space:nowrap;font-size:17.5px;color:#fff"><span>220.00</span></div><div style="position:absolute;left:1381.5px;top:767.0px;width:110px;height:30px;display:flex;align-items:center;justify-content:center;white-space:nowrap;font-size:17.5px;color:#ff0000"><span>-160.00</span></div><div style="position:absolute;left:1826px;top:837px;width:41px;height:42px;background:#337ab7;border-radius:5px"></div></div>
</body></html>
